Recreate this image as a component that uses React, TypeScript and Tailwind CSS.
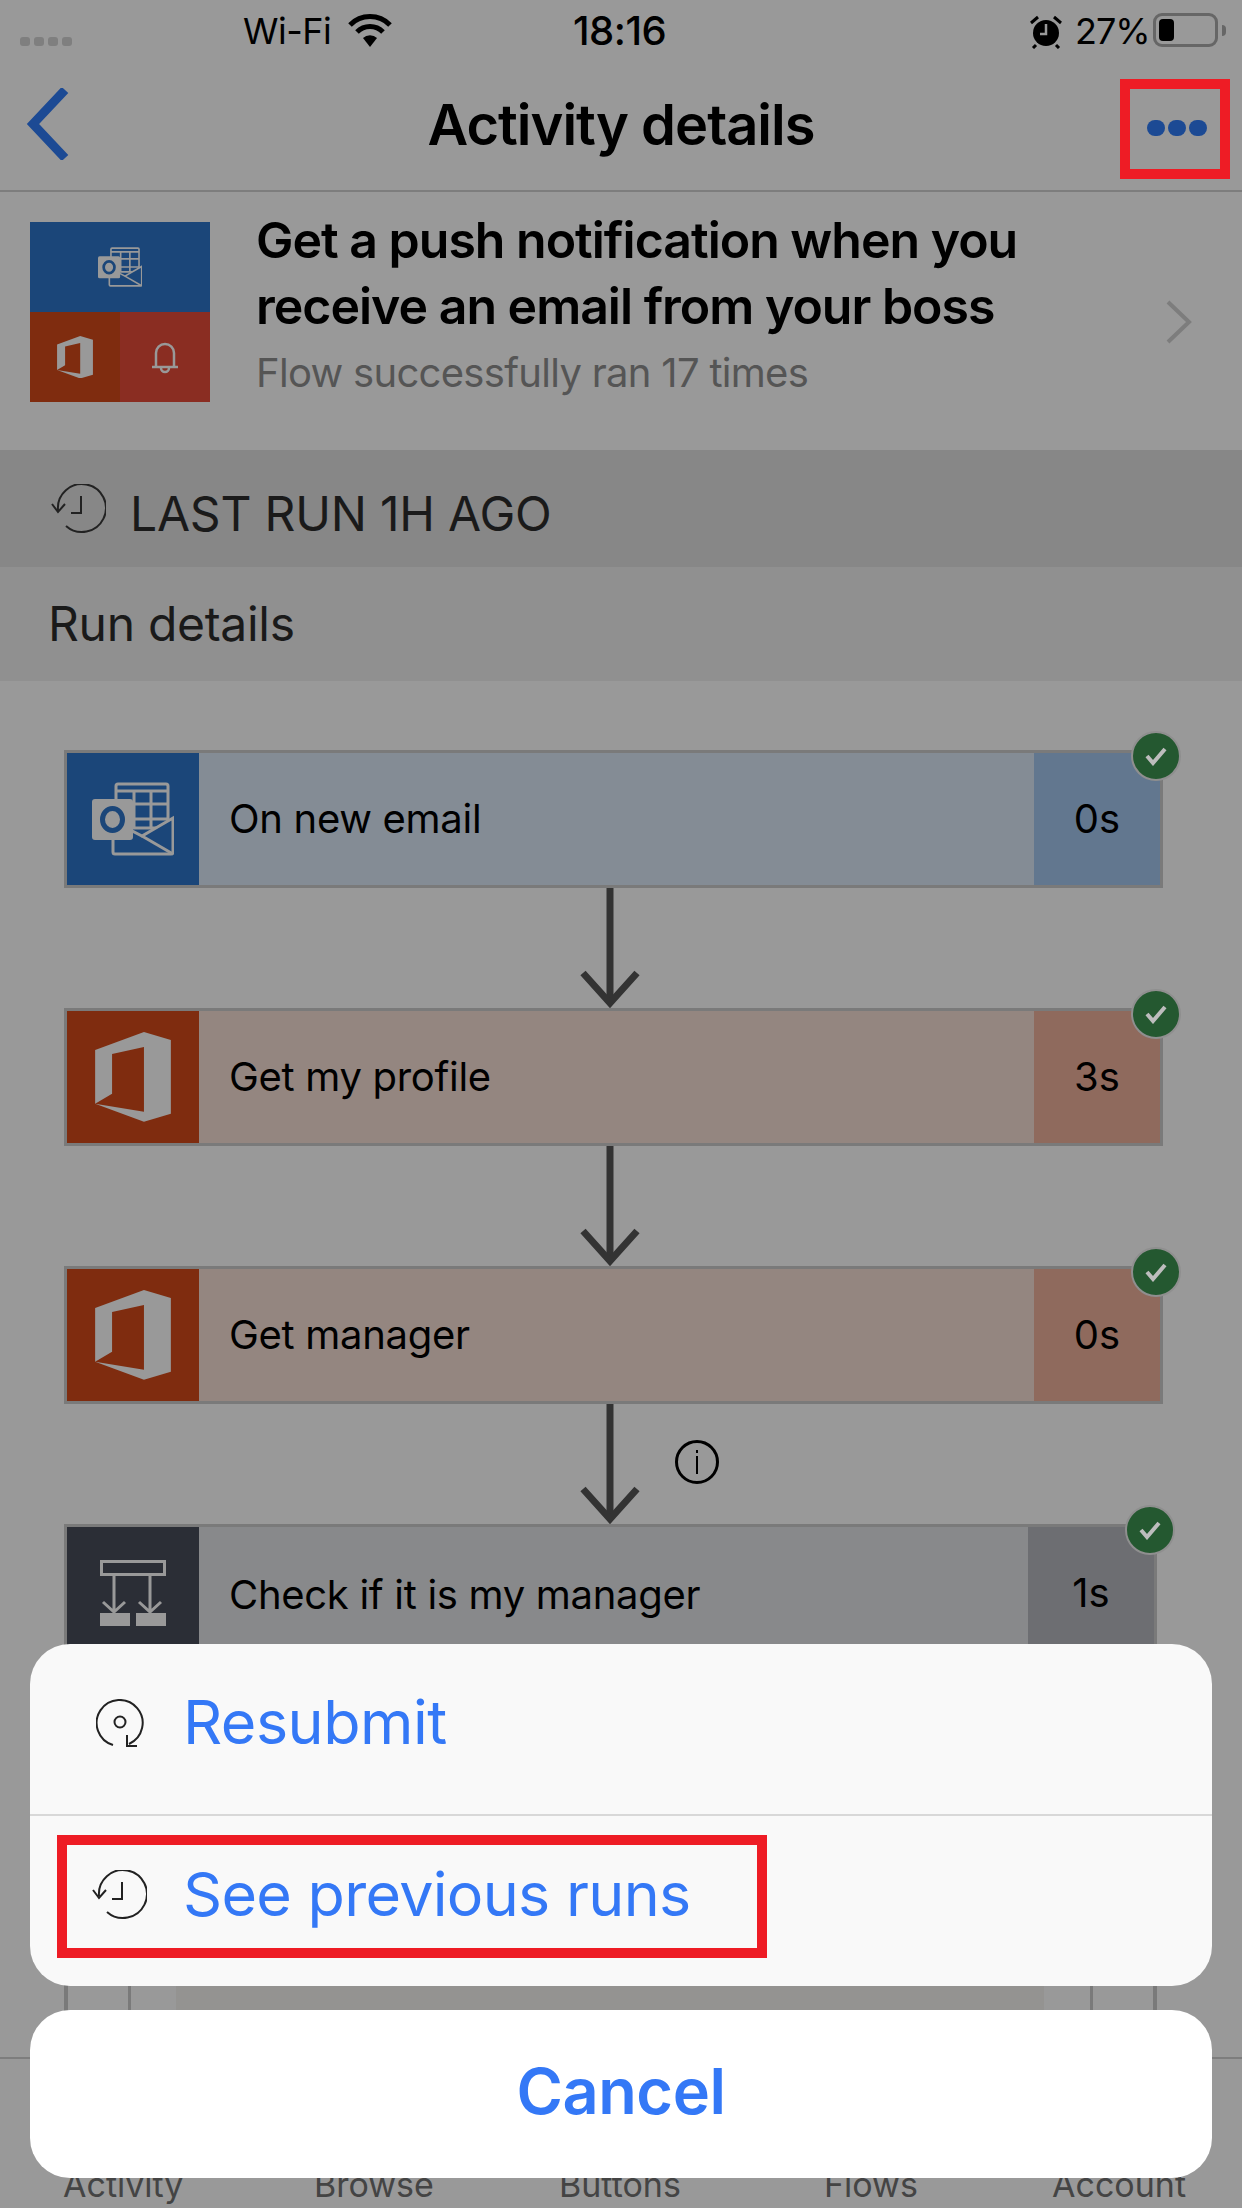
const sans = "font-['Inter','Liberation_Sans',sans-serif]";

function OutlookIcon({ scale = 1 }: { scale?: number }) {
  return (
    <svg width={82 * scale} height={74 * scale} viewBox="0 0 82 74" fill="none" aria-hidden>
      <rect x="24" y="2" width="52" height="44" rx="2" stroke="#999" strokeWidth="3" />
      <path d="M24 9h52M42 9v36M59 9v36M24 22h52M24 37h52" stroke="#999" strokeWidth="3" />
      <path d="M21 40v30a2 2 0 0 0 2 2h56a2 2 0 0 0 2-2V36L50 54 23 40" stroke="#999" strokeWidth="3" fill="#1b4679" />
      <path d="M50 54l31 18" stroke="#999" strokeWidth="3" />
      <rect x="0" y="17" width="41" height="41" rx="3" fill="#999" />
      <ellipse cx="20.5" cy="37.5" rx="10" ry="11" stroke="#1b4679" strokeWidth="5" />
    </svg>
  );
}

function OfficeIcon({ size = 76 }: { size?: number }) {
  return (
    <svg width={size} height={size * 1.18} viewBox="0 0 76 90" aria-hidden>
      <path fill="#999" d="M0 18 49 0l27 8v74L49 90 0 72l49 8V15L17 22v40L0 72z" />
    </svg>
  );
}

function BranchIcon() {
  return (
    <svg width="66" height="66" viewBox="0 0 66 66" fill="none" aria-hidden>
      <rect x="1.5" y="1.5" width="63" height="13" stroke="#999" strokeWidth="3" />
      <path d="M14 15v37M50 15v37M3 42l11 10 11-10M39 42l11 10 11-10" stroke="#999" strokeWidth="3" />
      <rect x="0" y="53" width="30" height="13" fill="#999" />
      <rect x="36" y="53" width="30" height="13" fill="#999" />
    </svg>
  );
}

function HistoryIcon({ color }: { color: string }) {
  return (
    <svg width="55" height="50" viewBox="0 0 55 50" fill="none" stroke={color} strokeWidth="2" aria-hidden>
      <path d="M7 26A24 24 0 1 1 15 42" />
      <path d="M1 20l6 8 7-8M30 12v17H20" />
    </svg>
  );
}

function ResubmitIcon() {
  return (
    <svg width="48" height="48" viewBox="0 0 48 48" fill="none" stroke="#222" strokeWidth="2" aria-hidden>
      <path d="M17 46A23 23 0 1 1 33 45" />
      <circle cx="24" cy="23" r="5.5" />
      <path d="M31 36v11h10" />
    </svg>
  );
}

function Badge() {
  return (
    <div className="absolute -right-[21px] -top-[22px] flex h-[50px] w-[50px] items-center justify-center rounded-full border-[2px] border-[#8f8f8f] bg-[#245830]">
      <svg width="24" height="20" viewBox="0 0 24 20" fill="none" aria-hidden>
        <path d="M3 10l6 7L21 3" stroke="#bdbdbd" strokeWidth="4" />
      </svg>
    </div>
  );
}

function Arrow() {
  return (
    <div className="flex h-[120px] w-full justify-center">
      <svg width="60" height="120" viewBox="0 0 60 120" fill="none" aria-hidden>
        <path d="M30 0v114" stroke="#333" strokeWidth="7" />
        <path d="M3 85l27 30 27-30" stroke="#333" strokeWidth="7" />
      </svg>
    </div>
  );
}

type StepProps = {
  icon: React.ReactNode;
  label: string;
  time: string;
  iconBg: string;
  bodyBg: string;
  timeBg: string;
  width?: string;
  textPad?: string;
};

function Step({ icon, label, time, iconBg, bodyBg, timeBg, width = 'w-[1099px]', textPad = '' }: StepProps) {
  return (
    <div className={`relative flex h-[138px] border-[3px] border-[#7a7a7a] ${width}`}>
      <div className={`flex w-[132px] shrink-0 items-center justify-center ${iconBg}`}>{icon}</div>
      <div className={`flex flex-1 items-center pl-[30px] text-[40px] tracking-[-0.3px] text-black ${bodyBg} ${textPad}`}>{label}</div>
      <div className={`flex w-[126px] shrink-0 items-center justify-center text-[40px] text-black ${timeBg}`}>{time}</div>
      <Badge />
    </div>
  );
}

export default function App() {
  return (
    <div className={`relative h-[2208px] w-[1242px] overflow-hidden bg-[#999999] ${sans}`}>
      {/* Status bar */}
      <div className="relative h-[62px] text-[36px] text-black">
        <div className="absolute left-[20px] top-[37px] flex gap-[4px]">
          {[0, 1, 2, 3].map((i) => (
            <span key={i} className="h-[9px] w-[10px] rounded-[3px] bg-[#7f7f7f]" />
          ))}
        </div>
        <span className="absolute left-[243px] top-[9px] leading-[44px] tracking-[-0.5px]">Wi-Fi</span>
        <svg className="absolute left-[347px] top-[12px]" width="46" height="36" viewBox="0 0 46 36" aria-hidden>
          <path fill="none" stroke="#000" strokeWidth="5" d="M3 13a28 28 0 0 1 40 0M10 20a18 18 0 0 1 26 0" />
          <path fill="#000" d="M16 26a10 10 0 0 1 14 0l-7 9z" />
        </svg>
        <span className="absolute left-[573px] top-[9px] text-[40px] font-medium leading-[44px] tracking-[-0.5px]">18:16</span>
        <svg className="absolute left-[1030px] top-[15px]" width="32" height="34" viewBox="0 0 32 34" aria-hidden>
          <circle cx="16" cy="18" r="13" fill="#000" />
          <path d="M16 9v10h-6" stroke="#999" strokeWidth="2.5" fill="none" />
          <path d="M1 8l7-6M31 8l-7-6M6 30l-3 3M26 30l3 3" stroke="#000" strokeWidth="3" />
        </svg>
        <span className="absolute left-[1075px] top-[9px] leading-[44px] tracking-[-1px]">27%</span>
        <div className="absolute left-[1153px] top-[13px] flex h-[34px] w-[65px] items-center rounded-[9px] border-[3px] border-[#666] p-[3px]">
          <div className="h-full w-[15px] rounded-[4px] bg-black" />
        </div>
        <div className="absolute left-[1222px] top-[25px] h-[11px] w-[4px] rounded-r-full bg-[#666]" />
      </div>

      {/* Nav */}
      <div className="relative flex h-[130px] items-center justify-center border-b-[2px] border-[#7d7d7d]">
        <svg className="absolute left-[25px] top-[26px]" width="44" height="72" viewBox="0 0 44 72" fill="none" aria-hidden>
          <path d="M40 2 8 36l32 34" stroke="#1c4a94" strokeWidth="9" />
        </svg>
        <span className="pb-[2px] text-[56px] font-semibold tracking-[-1px] text-black">Activity details</span>
        <div className="absolute left-[1120px] top-[17px] flex h-[100px] w-[110px] items-center justify-center border-[10px] border-[#ee1c25]">
          <div className="flex gap-[3px] pb-[2px] pl-[4px]">
            {[0, 1, 2].map((i) => (
              <span key={i} className="h-[16px] w-[18px] rounded-full bg-[#1c4a94]" />
            ))}
          </div>
        </div>
      </div>

      {/* Flow summary */}
      <div className="relative flex h-[258px] items-start pl-[30px]">
        <div className="mt-[30px] flex h-[180px] w-[180px] flex-col">
          <div className="flex h-[90px] items-center justify-center bg-[#1b4679]">
            <OutlookIcon scale={0.54} />
          </div>
          <div className="flex h-[90px]">
            <div className="flex w-[90px] items-center justify-center bg-[#7f2c0f]">
              <OfficeIcon size={36} />
            </div>
            <div className="flex w-[90px] items-center justify-center bg-[#8a2d22]">
              <svg width="28" height="34" viewBox="0 0 28 34" fill="none" stroke="#999" strokeWidth="2.5" aria-hidden>
                <path d="M5 26V13a9 9 0 0 1 18 0v13M1 27h26M10 28a4 4 0 0 0 8 0" />
              </svg>
            </div>
          </div>
        </div>
        <div className="pl-[46px] pt-[15px]">
          <p className="text-[50px] font-semibold leading-[66px] tracking-[-1px] text-black">
            Get a push notification when you
            <br />
            receive an email from your boss
          </p>
          <p className="mt-[8px] text-[40px] leading-[52px] tracking-[-0.7px] text-[#555]">Flow successfully ran 17 times</p>
        </div>
        <svg className="absolute left-[1165px] top-[108px]" width="28" height="44" viewBox="0 0 28 44" fill="none" aria-hidden>
          <path d="M3 2l21 20L3 42" stroke="#7d7d7d" strokeWidth="4" />
        </svg>
      </div>

      {/* Section bands */}
      <div className="flex h-[117px] items-center gap-[24px] bg-[#878787] pl-[51px] text-[48px] tracking-[-0.2px] text-[#1a1a1a]">
        <HistoryIcon color="#222" />
        <span className="pt-[10px]">LAST RUN 1H AGO</span>
      </div>
      <div className="flex h-[114px] items-center bg-[#909090] pl-[48px] text-[48px] tracking-[-0.3px] text-[#1a1a1a]">Run details</div>

      {/* Run steps */}
      <div className="relative pl-[64px] pt-[69px]">
        <Step
          icon={<OutlookIcon />}
          label="On new email"
          time="0s"
          iconBg="bg-[#1b4679]"
          bodyBg="bg-[#848c95]"
          timeBg="bg-[#62778f]"
        />
        <div className="w-[1092px]">
          <Arrow />
        </div>
        <Step
          icon={<OfficeIcon />}
          label="Get my profile"
          time="3s"
          iconBg="bg-[#7f2c0f]"
          bodyBg="bg-[#948680]"
          timeBg="bg-[#8f6a5d]"
        />
        <div className="w-[1092px]">
          <Arrow />
        </div>
        <Step
          icon={<OfficeIcon />}
          label="Get manager"
          time="0s"
          iconBg="bg-[#7f2c0f]"
          bodyBg="bg-[#948680]"
          timeBg="bg-[#8f6a5d]"
        />
        <div className="relative w-[1092px]">
          <Arrow />
          <div className="absolute left-[611px] top-[36px] flex h-[44px] w-[44px] items-center justify-center rounded-full border-[3px] border-black">
            <div className="flex flex-col items-center gap-[3px]">
              <span className="h-[3px] w-[2px] bg-black" />
              <span className="h-[18px] w-[2px] bg-black" />
            </div>
          </div>
        </div>
        <Step
          icon={<BranchIcon />}
          label="Check if it is my manager"
          time="1s"
          iconBg="bg-[#2b2e36]"
          bodyBg="bg-[#88898b]"
          timeBg="bg-[#6d6e72]"
          width="w-[1093px]"
          textPad="pt-[4px]"
        />

        {/* Condition branches, mostly behind the sheet */}
        <div className="flex h-[395px] w-[1093px] border-x-[4px] border-[#7a7a7a]">
          <div className="w-[63px] border-r-[3px] border-[#7a7a7a]" />
          <div className="w-[45px]" />
          <div className="flex-1 bg-[#949391]" />
          <div className="w-[49px] border-r-[3px] border-[#7a7a7a]" />
          <div className="w-[60px]" />
        </div>
      </div>

      {/* Tab bar */}
      <div className="absolute inset-x-0 bottom-0 h-[151px] border-t-[2px] border-[#7d7d7d] bg-[#999999] text-[34px] text-[#444]">
        {[
          ['Activity', 'left-[63px]'],
          ['Browse', 'left-[314px]'],
          ['Buttons', 'left-[559px]'],
          ['Flows', 'left-[824px]'],
          ['Account', 'left-[1052px]'],
        ].map(([label, left]) => (
          <span key={label} className={`absolute top-[104px] leading-[44px] ${left}`}>
            {label}
          </span>
        ))}
      </div>

      {/* Action sheet */}
      <div className="absolute left-[30px] top-[1644px] w-[1182px]">
        <div className="rounded-[40px] bg-[#f9f9f9]">
          <div className="flex h-[172px] items-center gap-[39px] border-b-[2px] border-[#d8d8d8] pb-[12px] pl-[66px] text-[61px] tracking-[-0.5px] text-[#3478f6]">
            <ResubmitIcon />
            <span>Resubmit</span>
          </div>
          <div className="relative flex h-[170px] items-center gap-[36px] pb-[12px] pl-[62px] text-[61px] tracking-[-0.7px] text-[#3478f6]">
            <HistoryIcon color="#222" />
            <span>See previous runs</span>
            <div className="absolute left-[27px] top-[19px] h-[123px] w-[710px] border-[10px] border-[#ee1c25]" />
          </div>
        </div>
        <div className="mt-[24px] flex h-[168px] items-center justify-center rounded-[40px] bg-white pb-[6px] text-[63px] font-semibold tracking-[-0.4px] text-[#3478f6]">Cancel</div>
      </div>
    </div>
  );
}
